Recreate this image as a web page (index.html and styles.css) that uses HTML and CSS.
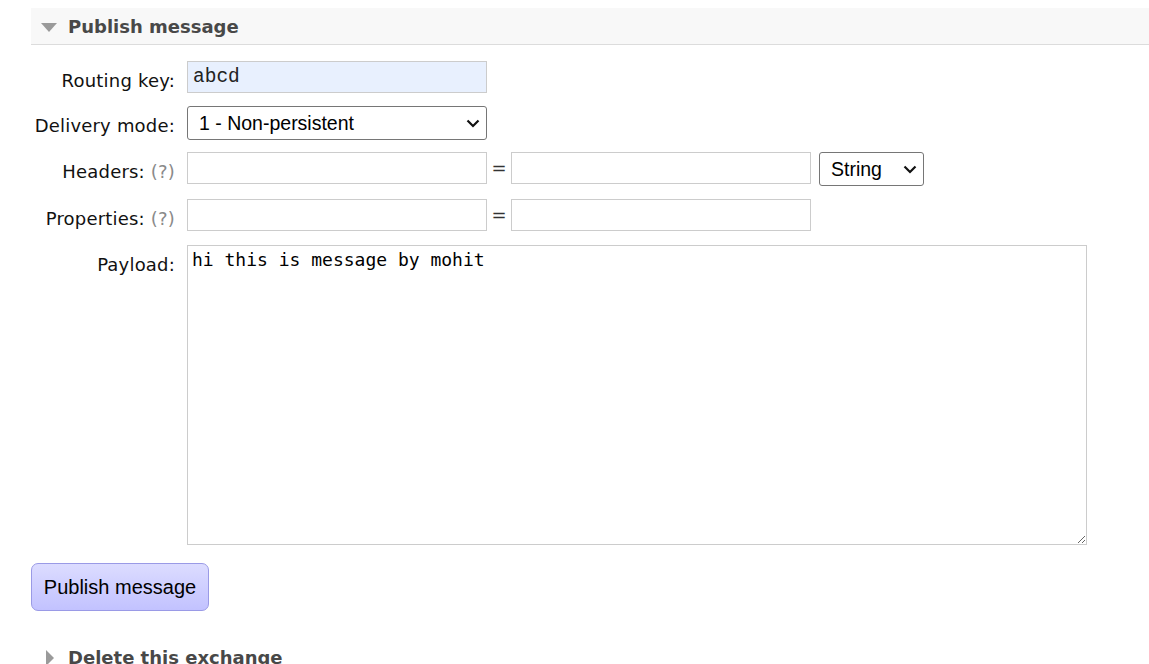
FILE: index.html
```html
<!DOCTYPE html>
<html>
<head>
<meta charset="utf-8">
<link rel="stylesheet" href="styles.css">
</head>
<body>
<div class="page">
  <div class="section">
    <h2 class="section-h open"><span class="tri tri-down"></span>Publish message</h2>
    <form class="pub-form">
      <div class="row r1">
        <label class="lbl">Routing key:</label>
        <input class="field autofill" type="text" value="abcd">
      </div>
      <div class="row r2">
        <label class="lbl">Delivery mode:</label>
        <div class="sel-wrap sel-wide">
          <select class="sel"><option>1 - Non-persistent</option></select>
          <svg class="chev" width="14" height="9" viewBox="0 0 14 9"><path d="M1.5 1.5 L7 7 L12.5 1.5" fill="none" stroke="#111" stroke-width="2.2"/></svg>
        </div>
      </div>
      <div class="row r3">
        <label class="lbl">Headers: <span class="help">(?)</span></label>
        <input class="field" type="text">
        <span class="eq">=</span>
        <input class="field" type="text">
        <div class="sel-wrap sel-small">
          <select class="sel"><option>String</option></select>
          <svg class="chev" width="14" height="9" viewBox="0 0 14 9"><path d="M1.5 1.5 L7 7 L12.5 1.5" fill="none" stroke="#111" stroke-width="2.2"/></svg>
        </div>
      </div>
      <div class="row r4">
        <label class="lbl">Properties: <span class="help">(?)</span></label>
        <input class="field" type="text">
        <span class="eq">=</span>
        <input class="field" type="text">
      </div>
      <div class="row r5">
        <label class="lbl">Payload:</label>
        <textarea class="payload">hi this is message by mohit</textarea>
      </div>
      <button type="button" class="btn">Publish message</button>
    </form>
  </div>
  <div class="section">
    <h2 class="section-h closed"><span class="tri tri-right"></span>Delete this exchange</h2>
  </div>
</div>
</body>
</html>
```
FILE: styles.css
```css
html, body {
  margin: 0;
  padding: 0;
  background: #fff;
}
body {
  font-family: "DejaVu Sans", Verdana, sans-serif;
  font-size: 18px;
  color: #000;
}
.page {
  padding: 8px 0 0 31px;
}
.section-h {
  margin: 0;
  height: 36px;
  box-sizing: border-box;
  display: flex;
  align-items: center;
  font-size: 18px;
  font-weight: bold;
  color: #484848;
  padding-left: 10px;
}
.section-h.open {
  background: #f8f8f8;
  border-bottom: 1px solid #dcdcdc;
  height: 37px;
}
.tri {
  display: inline-block;
  width: 0;
  height: 0;
  margin-right: 11px;
}
.tri-down {
  border-left: 8px solid transparent;
  border-right: 8px solid transparent;
  border-top: 9px solid #9a9a9a;
  margin-top: 2px;
}
.tri-right {
  border-top: 8px solid transparent;
  border-bottom: 8px solid transparent;
  border-left: 8px solid #9a9a9a;
  margin-left: 5px;
  margin-right: 14px;
  margin-top: 2px;
}
.closed {
  margin-top: 28px;
}
.pub-form {
  padding-top: 16px;
}
.row {
  display: flex;
  align-items: flex-start;
}
.r1 { margin-bottom: 13px; }
.r2 { margin-bottom: 12px; }
.r3 { margin-bottom: 13px; }
.r4 { margin-bottom: 14px; }
.r5 { margin-bottom: 18px; }
.lbl {
  width: 144px;
  margin-right: 12px;
  text-align: right;
  padding-top: 9px;
  line-height: 21px;
  white-space: nowrap;
  letter-spacing: 0.2px;
  color: #111;
}
.help {
  color: #8a8a8a;
}
.field {
  box-sizing: border-box;
  width: 300px;
  height: 32px;
  border: 1px solid #cccccc;
  background: #fff;
  margin: 0;
  padding: 0 5px;
  font-family: "Liberation Mono", "Courier New", monospace;
  font-size: 19.5px;
  color: #222;
  outline: none;
}
.autofill {
  background: #e8f0fe;
}
.eq {
  width: 24px;
  text-align: center;
  line-height: 32px;
  font-size: 18px;
  color: #333;
}
.sel-wrap {
  position: relative;
  height: 34px;
}
.sel-wide {
  width: 300px;
}
.sel-small {
  width: 105px;
  margin-left: 8px;
}
.sel {
  appearance: none;
  -webkit-appearance: none;
  box-sizing: border-box;
  width: 100%;
  height: 34px;
  margin: 0;
  border: 1px solid #767676;
  border-radius: 3px;
  background: #fff;
  font-family: "Liberation Sans", Arial, sans-serif;
  font-size: 19.5px;
  color: #000;
  padding: 0 0 0 11px;
  outline: none;
}
.chev {
  position: absolute;
  right: 7px;
  top: 13px;
  pointer-events: none;
}
.payload {
  box-sizing: border-box;
  width: 900px;
  height: 300px;
  margin: 0;
  border: 1px solid #cccccc;
  padding: 3px 4px;
  font-family: "DejaVu Sans Mono", Consolas, monospace;
  font-size: 18px;
  line-height: 21px;
  color: #000;
  outline: none;
  resize: both;
}
.btn {
  display: block;
  box-sizing: border-box;
  width: 178px;
  height: 48px;
  margin: 0;
  border: 1px solid #9a9ae6;
  border-radius: 7px;
  background: linear-gradient(#dcdcff, #c2c2ff);
  font-family: "Liberation Sans", Arial, sans-serif;
  font-size: 20px;
  color: #000;
  padding: 0;
}
```
